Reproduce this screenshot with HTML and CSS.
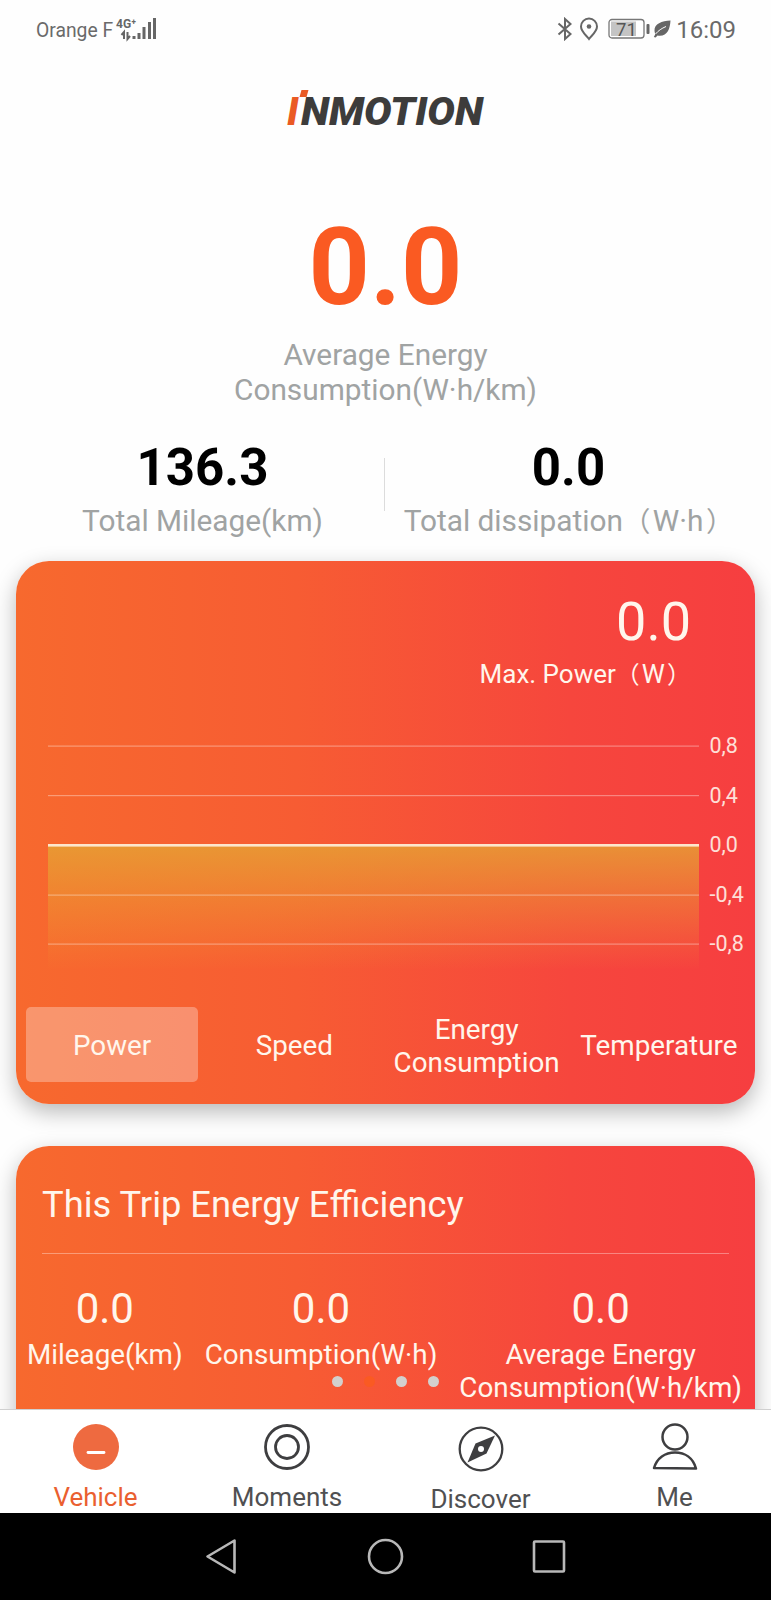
FILE: index.html
```html
<!DOCTYPE html>
<html lang="en">
<head>
  <meta charset="UTF-8" />
  <meta name="viewport" content="width=device-width, initial-scale=1" />
  <title>InMotion</title>
  <link rel="stylesheet" href="styles.css">
</head>
<body>

  <div class="status-bar">
    <span class="carrier">Orange F</span>
    <svg class="signal" width="42" height="26" viewBox="0 0 42 26">
      <text x="1" y="11.500" class="net-type" textLength="20" lengthAdjust="spacingAndGlyphs">4G⁺</text>
      <path d="M9 23v-7l-2.500 3M12.500 16v7l2.500-3" fill="none" stroke="#666" stroke-width="2"/>
      <path d="M17.500 20h3v3h-3zM22.500 17h3v6h-3zM27.500 11h3v12h-3zM33 6h3v17h-3zM38 2h3v21h-3z" fill="#666"/>
    </svg>
    <div class="status-right">
      <svg width="16" height="24" viewBox="0 0 16 24">
        <path d="M1.500 6.500L13.500 17 8 22V2l5.500 5L1.500 17.500" fill="none" stroke="#666" stroke-width="2"/>
      </svg>
      <svg class="pin" width="20" height="24" viewBox="0 0 20 24">
        <path d="M10 22C7 18 2 14.500 2 9.500a8 8 0 0 1 16 0C18 14.500 13 18 10 22z" fill="none" stroke="#666" stroke-width="2"/>
        <circle cx="10" cy="9.500" r="2.300" fill="#666"/>
      </svg>
      <svg class="battery" width="43" height="24" viewBox="0 0 43 24">
        <rect x="1" y="2.500" width="35" height="18.500" rx="3" fill="#fff" stroke="#777" stroke-width="1.300"/>
        <rect x="3" y="4.500" width="25" height="14.500" fill="#c4c4c4"/>
        <rect x="38.500" y="7" width="3" height="10" rx="1" fill="#666"/>
        <text x="18.500" y="18.500" text-anchor="middle" class="battery-text">71</text>
      </svg>
      <svg class="leaf" width="19" height="24" viewBox="0 0 19 24">
        <path d="M17.500 3.500C9 4 1 6.500 1.500 14l.7 3.500L.8 20l1.800.5L4.500 18.500C14 20 17 12.500 17.500 3.500z" fill="#666"/>
        <path d="M2.500 17C5.500 13.500 8.500 11.500 13 9.500" fill="none" stroke="#fefefe" stroke-width="1"/>
      </svg>
      <span class="clock">16:09</span>
    </div>
  </div>

  <div class="logo">
    <svg width="220" height="54" viewBox="0 0 220 54">
      <path d="M19.500 2h7l-2 7h-7z" fill="#ea5a24"/>
      <text x="5" y="37" class="logo-text logo-i">I</text>
      <text x="19" y="37" class="logo-text" textLength="182" lengthAdjust="spacingAndGlyphs">NMOTION</text>
    </svg>
  </div>

  <div class="average">
    <div class="average-value">0.0</div>
    <div class="average-label">Average Energy<br>Consumption(W·h/km)</div>
  </div>

  <div class="totals">
    <div class="total">
      <div class="total-value">136.3</div>
      <div class="total-label">Total Mileage(km)</div>
    </div>
    <div class="divider"></div>
    <div class="total">
      <div class="total-value">0.0</div>
      <div class="total-label">Total dissipation<span class="paren">（</span>W·h<span class="paren close">）</span></div>
    </div>
  </div>

  <main class="cards">
    <section class="card chart-card">
      <div class="max">
        <div class="max-value">0.0</div>
        <div class="max-label">Max. Power<span class="paren">（</span>W<span class="paren close">）</span></div>
      </div>

      <div class="chart">
        <svg class="plot" width="651" height="250" viewBox="0 0 651 250">
          <defs>
            <linearGradient id="area" x1="0" y1="0" x2="0" y2="1">
              <stop offset="0" stop-color="#e5a434" stop-opacity="0.8"/>
              <stop offset="1" stop-color="#f0a030" stop-opacity="0"/>
            </linearGradient>
          </defs>
          <rect x="0" y="115" width="651" height="125" fill="url(#area)"/>
          <g fill="#fff" fill-opacity="0.35">
            <rect y="15.500" width="651" height="1.200"/>
            <rect y="65" width="651" height="1.200"/>
            <rect y="164.500" width="651" height="1.200"/>
            <rect y="213.500" width="651" height="1.200"/>
          </g>
          <rect y="114" width="651" height="2.600" fill="#fde6cc"/>
        </svg>
        <div class="axis">
          <span>0,8</span>
          <span>0,4</span>
          <span>0,0</span>
          <span>-0,4</span>
          <span>-0,8</span>
        </div>
      </div>

      <div class="chart-tabs">
        <div class="chart-tab active">Power</div>
        <div class="chart-tab">Speed</div>
        <div class="chart-tab">Energy Consumption</div>
        <div class="chart-tab">Temperature</div>
      </div>
    </section>

    <section class="card trip-card">
      <h2>This Trip Energy Efficiency</h2>
      <div class="trip-stats">
        <div class="stat">
          <div class="stat-value">0.0</div>
          <div class="stat-label">Mileage(km)</div>
        </div>
        <div class="stat">
          <div class="stat-value">0.0</div>
          <div class="stat-label">Consumption(W·h)</div>
        </div>
        <div class="stat">
          <div class="stat-value">0.0</div>
          <div class="stat-label">Average Energy<br>Consumption(W·h/km)</div>
        </div>
      </div>
    </section>

    <div class="pager">
      <i></i><i class="current"></i><i></i><i></i>
    </div>
  </main>

  <nav class="tab-bar">
    <a class="tab selected">
      <svg width="48" height="48" viewBox="0 0 48 48">
        <circle cx="24" cy="24" r="23" fill="#ee6a40"/>
        <path d="M16 29.500h16" stroke="#fff" stroke-width="2.800" stroke-linecap="round"/>
      </svg>
      <span>Vehicle</span>
    </a>
    <a class="tab">
      <svg width="48" height="48" viewBox="0 0 48 48">
        <g fill="none" stroke="#3e3e40" stroke-width="2.800">
          <circle cx="24" cy="24" r="21.500"/>
          <circle cx="24" cy="24" r="11.500"/>
        </g>
      </svg>
      <span>Moments</span>
    </a>
    <a class="tab tab-low">
      <svg width="48" height="48" viewBox="0 0 48 48">
        <circle cx="24" cy="24" r="21.300" fill="none" stroke="#3e3e40" stroke-width="2.300"/>
        <path d="M38 10.500L18.500 18.500 10.500 37.500 29.500 28.500z" fill="#3e3e40"/>
        <circle cx="24" cy="24" r="3" fill="#fff"/>
      </svg>
      <span>Discover</span>
    </a>
    <a class="tab">
      <svg width="48" height="48" viewBox="0 0 48 48">
        <g fill="none" stroke="#3e3e40" stroke-width="2.500" stroke-linejoin="round">
          <circle cx="24" cy="14" r="12.500"/>
          <path d="M3 45C6 35 14 29.500 24 29.500s18 5.500 21 16z"/>
        </g>
      </svg>
      <span>Me</span>
    </a>
  </nav>

  <div class="system-nav">
    <svg width="38" height="38" viewBox="0 0 38 38">
      <path d="M3.500 19.500L30.500 3.500v32z"/>
    </svg>
    <svg width="38" height="38" viewBox="0 0 38 38">
      <circle cx="18.500" cy="19.500" r="16.500"/>
    </svg>
    <svg width="38" height="38" viewBox="0 0 38 38">
      <rect x="4" y="4.500" width="30" height="30" rx="1"/>
    </svg>
  </div>

</body>
</html>
```

FILE: styles.css
```css
* {
  box-sizing: border-box;
}
body {
  margin: 0;
  width: 771px;
  height: 1600px;
  display: flex;
  flex-direction: column;
  overflow: hidden;
  background-color: #fefefe;
  color: #000;
  font-family: Roboto, "Noto Sans CJK SC", sans-serif;
}
svg {
  display: block;
  flex: none;
}

/* status bar */
.status-bar {
  display: flex;
  align-items: center;
  height: 58px;
  padding: 0 35px 0 36px;
  color: #6a6a6a;
}
.carrier {
  font-size: 19.3px;
  line-height: 24px;
  margin-top: 3px;
}
.signal {
  margin: 0 0 0 2px;
}
.net-type {
  font: bold 13px Roboto, sans-serif;
  fill: #666;
}
.status-right {
  display: flex;
  align-items: center;
  margin-left: auto;
}
.pin {
  margin-left: 6px;
}
.battery {
  margin-left: 9px;
}
.battery-text {
  font: 18.5px Roboto, sans-serif;
  fill: #555;
}
.leaf {
  margin: 0 4px 0 2px;
}
.clock {
  font-size: 24px;
  line-height: 28px;
  padding-top: 1px;
}

/* logo */
.logo {
  height: 160px;
  padding: 30px 0 0 282px;
}
.logo-text {
  font: italic 900 39px Roboto, sans-serif;
  fill: #3d3c3b;
}
.logo-i {
  fill: #ea5a24;
}

/* headline numbers */
.average {
  height: 219px;
  text-align: center;
}
.average-value {
  font-size: 107px;
  font-weight: 700;
  line-height: 100px;
  color: #fa5a22;
}
.average-label {
  margin-top: 19px;
  font-size: 29.8px;
  line-height: 35px;
  color: #a0a3a3;
}
.totals {
  display: flex;
  height: 124px;
  padding-left: 20px;
}
.total {
  width: 365px;
  text-align: center;
  white-space: nowrap;
}
.total-value {
  font-size: 51px;
  font-weight: 700;
  line-height: 60px;
  margin-top: 1px;
}
.total-label {
  font-size: 29.8px;
  line-height: 36px;
  margin-top: 5px;
  color: #a0a3a3;
}
/* full-width brackets, drawn a little smaller and closer to the unit */
.paren {
  display: inline-block;
  width: 1.09em;
  font-size: 0.92em;
  line-height: 1;
  text-align: left;
}
.paren.close {
  text-align: right;
}
.divider {
  width: 1px;
  height: 53px;
  margin: 21px 1px 0 -1px;
  background-color: #dcdcdc;
}

/* cards */
.cards {
  position: relative;
  height: 878px;
  margin-top: -30px;
  padding: 30px 16px 0;
  overflow: hidden;
}
.card {
  border-radius: 33px;
  background: linear-gradient(90deg, #f7692e, #f75c33 38%, #f6463d 75%, #f63e40);
  box-shadow: 0 8px 22px rgba(0, 0, 0, 0.28);
  color: #fff6ec;
}
.chart-card {
  height: 543px;
  padding: 31px 5px 0;
}
.max {
  padding-right: 59px;
  text-align: right;
}
.max-value {
  font-size: 54px;
  line-height: 60px;
}
.max-label {
  font-size: 26px;
  line-height: 32px;
  margin-top: 6px;
}
.chart {
  display: flex;
  margin-top: 40px;
  padding-left: 27px;
}
.axis {
  display: flex;
  flex-direction: column;
  padding-left: 10.5px;
  font-size: 21.5px;
  opacity: 0.88;
}
.axis span {
  height: 49.6px;
  line-height: 31px;
}
.chart-tabs {
  display: grid;
  grid-template-columns: repeat(4, 1fr);
  margin-top: 27px;
  height: 75px;
}
.chart-tab {
  display: flex;
  align-items: center;
  justify-content: center;
  margin: 0 5px;
  padding-top: 2px;
  border-radius: 5px;
  font-size: 27.8px;
  line-height: 33px;
  text-align: center;
}
.chart-tab.active {
  background-color: rgba(255, 255, 255, 0.3);
}
.trip-card {
  height: 560px;
  margin-top: 42px;
}
.trip-card h2 {
  margin: 0 26px;
  padding: 38px 0 0;
  height: 108px;
  border-bottom: 1px solid rgba(255, 255, 255, 0.35);
  font-size: 36.3px;
  font-weight: 400;
  line-height: 42px;
}
.trip-stats {
  display: flex;
  justify-content: space-around;
  padding: 30px 2px 0 0;
  text-align: center;
}
.stat-value {
  font-size: 42px;
  line-height: 50px;
}
.stat-label {
  font-size: 27.8px;
  line-height: 33px;
  margin-top: 4px;
}
.pager {
  position: absolute;
  left: 332px;
  bottom: 22px;
  display: flex;
  gap: 21px;
}
.pager i {
  width: 11px;
  height: 11px;
  border-radius: 50%;
  background-color: #d3d0cd;
}
.pager .current {
  background-color: #fa5a22;
}

/* bottom navigation */
.tab-bar {
  position: relative;
  display: grid;
  grid-template-columns: 191px 192px 195px 193px;
  height: 104px;
  flex: none;
  border-top: 1px solid #d0d0d0;
  background-color: #fff;
  color: #505052;
}
.tab {
  display: flex;
  flex-direction: column;
  align-items: center;
  padding-top: 13px;
  font-size: 26px;
  line-height: 30px;
}
.tab span {
  margin-top: 11px;
}
.tab-low {
  padding-top: 15px;
}
.selected {
  color: #ea5f30;
}
.system-nav {
  display: flex;
  justify-content: center;
  gap: 125px;
  flex: 1;
  padding-top: 24px;
  background-color: #000;
}
.system-nav svg {
  fill: none;
  stroke: #b8b8b8;
  stroke-width: 2.6;
  stroke-linejoin: round;
}
```
